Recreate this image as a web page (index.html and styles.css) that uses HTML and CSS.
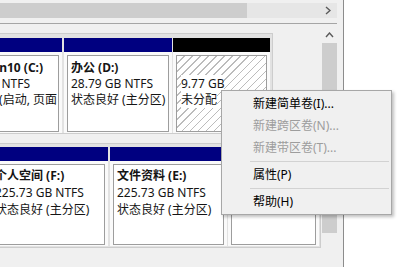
FILE: index.html
```html
<!DOCTYPE html>
<html>
  <head>
    <meta charset="utf-8">
    <title>磁盘管理</title>
    <link rel="stylesheet" href="styles.css">
  </head>
  <body>
    <div class="window">
      <!-- volume list scroll bar -->
      <div class="hscroll">
        <div class="hbar">
          <div class="hthumb"></div>
          <svg class="harrow" width="6" height="9" viewBox="0 0 6 9"><path d="M1 1 L5 4.5 L1 8" fill="none" stroke="#5a5a5a" stroke-width="1.4"/></svg>
        </div>
      </div>

      <div class="diskmap">
        <div class="disks">
          <div class="disk disk_top">
            <div class="part part_c">
              <div class="bar"></div>
              <div class="box">
                <p><b>系统盘Win10 (C:)</b></p>
                <p>59.90 GB NTFS</p>
                <p>状态良好 (启动, 页面</p>
              </div>
            </div>
            <div class="part part_d">
              <div class="bar"></div>
              <div class="box">
                <p><b>办公 (D:)</b></p>
                <p>28.79 GB NTFS</p>
                <p>状态良好 (主分区)</p>
              </div>
            </div>
            <div class="part part_free">
              <div class="bar bar_free"></div>
              <div class="box box_free">
                <p>&nbsp;</p>
                <p><span>9.77 GB</span></p>
                <p><span>未分配</span></p>
              </div>
            </div>
          </div>

          <div class="disk disk_bottom">
            <div class="part part_f">
              <div class="bar"></div>
              <div class="box">
                <p><b>个人空间 (F:)</b></p>
                <p>225.73 GB NTFS</p>
                <p>状态良好 (主分区)</p>
              </div>
            </div>
            <div class="part part_e">
              <div class="bar"></div>
              <div class="box">
                <p><b>文件资料 (E:)</b></p>
                <p>225.73 GB NTFS</p>
                <p>状态良好 (主分区)</p>
              </div>
            </div>
            <div class="part part_g">
              <div class="bar"></div>
              <div class="box"></div>
            </div>
          </div>
        </div>

        <div class="vscroll">
          <svg class="varrow" width="9" height="6" viewBox="0 0 9 6"><path d="M1 5 L4.5 1 L8 5" fill="none" stroke="#5a5a5a" stroke-width="1.4"/></svg>
          <div class="vthumb"></div>
        </div>
      </div>
    </div>

    <div class="menu">
      <div class="item">新建简单卷(I)...</div>
      <div class="item off">新建跨区卷(N)...</div>
      <div class="item off">新建带区卷(T)...</div>
      <div class="sep"></div>
      <div class="item">属性(P)</div>
      <div class="sep"></div>
      <div class="item">帮助(H)</div>
    </div>
  </body>
</html>
```

FILE: styles.css
```css
*
{
  box-sizing: border-box;
}
body
{
  margin: 0;
  width: 413px;
  height: 267px;
  overflow: hidden;
  position: relative;
  background: #fff;
  color: #151515;
  font-family: "Noto Sans", "Noto Sans CJK SC", sans-serif;
  font-size: 12px;
}
p
{
  margin: 0;
}

.window
{
  width: 344px;
  height: 267px;
  background: #f0f0f0;
  border-right: 1px solid #8c8c8c;
  overflow: hidden;
}

/* top scroll bar */
.hscroll
{
  width: 337px;
  height: 24px;
  padding-top: 3px;
  border-bottom: 1px solid #a5a5a5;
}
.hbar
{
  display: flex;
  align-items: center;
  height: 15px;
  background: #e6e6e6;
}
.hthumb
{
  width: 247px;
  height: 100%;
  background: #cdcdcd;
}
.harrow
{
  margin-left: auto;
  margin-right: 6px;
}

/* disk map */
.diskmap
{
  display: flex;
  height: 243px;
}
.disks
{
  width: 322px;
  flex: none;
}
.disk
{
  display: flex;
  border: 1px solid #cdcdcd;
  background: #e2e2e2;
}
.disk_top
{
  margin-top: 9px;
  margin-left: -60px;
  width: 333px;
  padding: 4px 2px 0 0;
}
.disk_bottom
{
  margin-top: 9px;
  margin-left: -13px;
  width: 334px;
  padding: 3px 1px 1px 0;
}
.part
{
  display: flex;
  flex-direction: column;
  background: #fafafa;
  padding: 0 3px 1px;
}
.bar
{
  height: 14px;
  margin: 0 -3px 3px;
  background: #000080;
}
.bar_free
{
  background: #000;
}
.box
{
  background: #fff;
  border: 1px solid #9d9d9d;
  padding: 3px 3px 0;
  white-space: nowrap;
  overflow: hidden;
}
.box b
{
  font-weight: bold;
}
.disk_top .box
{
  height: 77px;
  line-height: 16px;
  padding-top: 4px;
}
.disk_bottom .box
{
  height: 81px;
  line-height: 17px;
  padding-top: 2px;
}
.box_free
{
  padding-left: 4px;
  background: repeating-linear-gradient(135deg, #fff 0, #fff 4.6px, #bcbcbc 4.6px, #bcbcbc 5.7px);
}
.box_free span
{
  background: #fff;
}

.part_c { width: 121px; }
.part_d { width: 108px; margin-left: 2px; }
.part_free { width: 97px; margin-left: 1px; }
.part_f { width: 120px; }
.part_e { width: 117px; margin-left: 2px; }
.part_g { width: 91px; margin-left: 1px; }

/* right scroll bar */
.vscroll
{
  width: 15px;
  flex: none;
  display: flex;
  flex-direction: column;
  align-items: center;
}
.varrow
{
  margin-top: 8px;
}
.vthumb
{
  margin-top: 5px;
  width: 15px;
  height: 190px;
  background: #cdcdcd;
}

/* context menu */
.menu
{
  position: absolute;
  left: 221px;
  top: 90px;
  width: 171px;
  height: 125px;
  padding: 2px 0 1px;
  background: #f0f0f0;
  border: 1px solid #a7a7a7;
  box-shadow: 2px 2px 3px rgba(0, 0, 0, 0.25);
}
.item
{
  height: 22px;
  line-height: 22px;
  padding-left: 31px;
  color: #000;
}
.off
{
  color: #9d9d9d;
}
.sep
{
  height: 1px;
  margin: 2px 2px 2px 28px;
  background: #d2d2d2;
}
```
